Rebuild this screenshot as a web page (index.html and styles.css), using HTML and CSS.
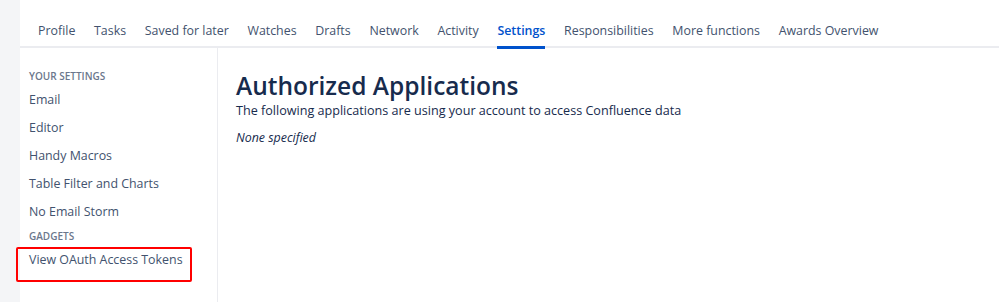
FILE: index.html
```html
<!DOCTYPE html>
<html>
<head>
	<link rel="stylesheet" href="styles.css">
</head>
<body>
    <div id="gutter"></div>
    <div id="page">
        <div class="tabs">
            <a href="#" class="tab">Profile</a><a href="#" class="tab">Tasks</a><a href="#" class="tab">Saved for later</a><a href="#" class="tab">Watches</a><a href="#" class="tab">Drafts</a><a href="#" class="tab">Network</a><a href="#" class="tab">Activity</a><a href="#" class="tab active">Settings</a><a href="#" class="tab">Responsibilities</a><a href="#" class="tab">More functions</a><a href="#" class="tab">Awards Overview</a>
        </div>
        <div class="body">
            <div class="sidebar">
                <div class="group_title">YOUR SETTINGS</div>
                <a href="#" class="side_item">Email</a>
                <a href="#" class="side_item">Editor</a>
                <a href="#" class="side_item">Handy Macros</a>
                <a href="#" class="side_item">Table Filter and Charts</a>
                <a href="#" class="side_item">No Email Storm</a>
                <div class="group_title">GADGETS</div>
                <a href="#" class="side_item marked">View OAuth Access Tokens</a>
            </div>
            <div class="main">
                <h1>Authorized Applications</h1>
                <p class="intro">The following applications are using your account to access Confluence data</p>
                <p class="empty">None specified</p>
            </div>
        </div>
    </div>
</body>
</html>
```

FILE: styles.css
```css
		html, body { height: 100%; }
		body {
			margin: 0;
			display: flex;
			font-family: "Open Sans", "Noto Sans", sans-serif;
			font-size: 12.4px;
			color: #172b4d;
			background-color: #fff;
		}
		a { text-decoration: none; }
		#gutter {
			width: 20px;
			background-color: #f4f5f7;
		}
		#page {
			flex: 1;
			display: flex;
			flex-direction: column;
		}
		.tabs {
			display: flex;
			height: 46px;
			padding-left: 18px;
			border-bottom: 2px solid #ebecf0;
		}
		.tab {
			color: #42526e;
			line-height: 20px;
			padding-top: 21px;
			margin-right: 18.7px;
			height: 25px;
			border-bottom: 2px solid transparent;
		}
		.tab.active {
			color: #0052cc;
			font-weight: 600;
			border-bottom: 3px solid #0052cc;
		}
		.body {
			flex: 1;
			display: flex;
		}
		.sidebar {
			width: 197px;
			padding-top: 18px;
			border-right: 1px solid #ebecf0;
			display: flex;
			flex-direction: column;
		}
		.group_title {
			padding-left: 9px;
			line-height: 20px;
			font-size: 10px;
			font-weight: 600;
			color: #6b778c;
		}
		.side_item {
			position: relative;
			padding-left: 9px;
			line-height: 28px;
			color: #42526e;
		}
		.marked::after {
			content: "";
			position: absolute;
			left: -4px;
			top: 1px;
			width: 176px;
			height: 35px;
			box-sizing: border-box;
			border: 2px solid #f00;
			border-radius: 2px;
		}
		.main {
			padding-left: 18px;
		}
		h1 {
			margin: 22px 0 0;
			font-size: 24.5px;
			font-weight: 600;
			line-height: 31px;
			color: #172b4d;
		}
		.intro {
			margin: 0;
			line-height: 20px;
			font-size: 12.6px;
		}
		.empty {
			margin: 7px 0 0;
			line-height: 20px;
			font-style: italic;
		}
```
